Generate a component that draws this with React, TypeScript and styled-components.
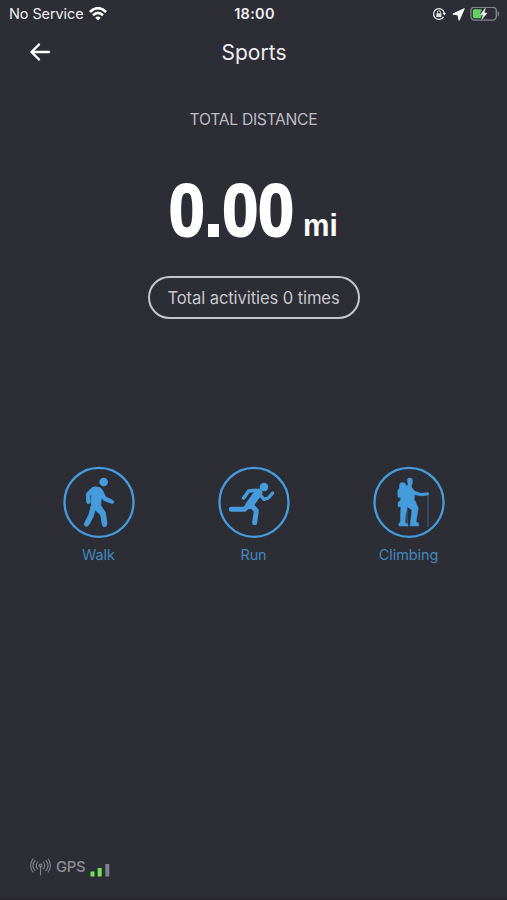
import React from "react";
import styled, { createGlobalStyle } from "styled-components";

const Global = createGlobalStyle`
  * { box-sizing: border-box; }
  body { margin: 0; background: #2d2d36; font-family: Inter, "Liberation Sans", sans-serif; }
`;
const Screen = styled.main`
  width: 507px; height: 900px; background: #2d2d36; color: #f2f2f5;
  display: flex; flex-direction: column; align-items: center; overflow: hidden;
  border-bottom: 3px solid #28262f;
`;
const StatusBar = styled.header`
  width: 100%; height: 28px; padding: 0 7px 0 9px;
  display: grid; grid-template-columns: 1fr auto 1fr; align-items: center;
`;
const StatusGroup = styled.div<{ $end?: boolean }>`
  display: flex; align-items: center; gap: 5.5px;
  justify-content: ${(p) => (p.$end ? "flex-end" : "flex-start")};
`;
const Label = styled.span<{ $size: number; $color?: string; $weight?: number; $track?: number }>`
  font-size: ${(p) => p.$size}px; line-height: 1.2; white-space: nowrap;
  color: ${(p) => p.$color ?? "#eeeef1"};
  font-weight: ${(p) => p.$weight ?? 400};
  letter-spacing: ${(p) => p.$track ?? 0}px;
`;
const NavBar = styled.nav`
  width: 100%; height: 48px; padding: 0 28px 0 29px;
  display: grid; grid-template-columns: 40px 1fr 40px; align-items: center; justify-items: center;
  svg { justify-self: start; }
  span { padding-top: 2px; }
`;
const Caption = styled.div`margin-top: 34px; height: 20px; display: flex; align-items: center;`;
const Distance = styled.div`
  width: 171px; height: 74px; margin-top: 43px; display: flex; align-items: baseline;
  color: #fff; font-family: "Liberation Sans", sans-serif; font-weight: 700; line-height: 74px;
`;
const Amount = styled.span`
  width: 134.5px; font-size: 75px; letter-spacing: -0.4px; transform: translateX(0.8px) scaleX(0.865);
  transform-origin: left; -webkit-text-stroke: 2px #fff;
`;
const Unit = styled.span`font-size: 32px; transform: scaleX(0.93); transform-origin: left;`;
const Pill = styled.button`
  width: 212px; height: 43px; margin-top: 29px; border: 2px solid #c6c6cb; border-radius: 22px;
  background: none; font-family: inherit; padding: 2px 0 0;
  display: flex; align-items: center; justify-content: center;
`;
const Activities = styled.section`
  width: 465px; margin-top: 147px; display: grid; grid-template-columns: repeat(3, 155px);
`;
const Activity = styled.div`
  display: flex; flex-direction: column; align-items: center; gap: 8px; color: #459bdb;
`;
const Gps = styled.footer`
  width: 100%; margin-top: auto; margin-bottom: 18px; height: 22px; padding-left: 30px;
  display: flex; align-items: center; gap: 5px;
`;
const Antenna = styled.svg`margin-top: -2px;`;
const SignalBars = styled.svg`margin-top: 3px;`;

const Ring = ({ children }: { children: React.ReactNode }) => (
  <svg width="72" height="72" viewBox="23 19 216 216" fill="currentColor" stroke="currentColor" strokeLinecap="round" strokeLinejoin="round">
    <circle cx="131" cy="128" r="103.5" fill="none" strokeWidth="7" />
    {children}
  </svg>
);
const Walk = () => (
  <Ring>
    <circle cx="145" cy="67" r="13" stroke="none" />
    <path d="M109 85Q119 79 130 83Q139 85 142 93L151 112L172 122Q178 126 174 130Q171 132 166 130L145 122L138 113L136 137L150 158L155 192Q155 201 147 201Q142 201 141 195L136 166L119 150L114 170L100 196Q96 202 90 199Q85 196 88 190L101 164L108 137V104L103 109L105 127Q104 132 98 132Q94 131 94 126L93 105Q93 101 97 97Z" strokeWidth="2.5" />
  </Ring>
);
const Run = () => (
  <Ring>
    <circle cx="161" cy="82" r="13" stroke="none" />
    <path d="M144 99L117 136" fill="none" strokeWidth="24" />
    <path d="M137 92L115 94L100 115" fill="none" strokeWidth="11" />
    <path d="M148 104L161 119L174 115L187 100" fill="none" strokeWidth="10" />
    <path d="M113 139L102 149H63" fill="none" strokeWidth="15" />
    <path d="M120 134L138 153L133 189" fill="none" strokeWidth="15" />
  </Ring>
);
const Climb = () => (
  <Ring>
    <path d="M126 59Q126 55 134 54Q142 55 142 61V68Q142 77 134 78H129L126 68Z" stroke="none" />
    <path d="M127 73V85H139V73Z" stroke="none" />
    <path d="M103 74Q103 69 109 69H116Q121 70 121 76L140 84L147 94L166 101L184 99Q188 95 190 101L189 106L168 109L148 105L146 122L151 128L108 136L105 142L98 140V128L104 124L107 116L98 112L97 93L102 86Z" strokeWidth="1.5" />
    <path d="M108 122H148L159 145L152 186L160 191V199H134L140 151L126 141L121 164L119 188L128 194V199H101L100 193L105 187L106 158Z" strokeWidth="1.5" />
    <path d="M188 103V200" strokeWidth="2.4" opacity=".65" />
    <path d="M125 145V199" strokeWidth="2.4" opacity=".7" />
  </Ring>
);
const Wifi = () => (
  <svg width="18" height="14" viewBox="0 0 18 14" fill="none" stroke="#fff" strokeWidth="2.6">
    <path d="M.9 5Q9-2.6 17.1 5M4 8.2Q9 3.7 14 8.2" /><path d="M6.3 10.7Q9 8.5 11.7 10.7L9 13.5Z" fill="#fff" stroke="none" />
  </svg>
);
const Lock = () => (
  <svg width="14" height="14" viewBox="0 0 14 14" fill="none" stroke="#e5e5e8" strokeWidth="1.3">
    <path d="M11.6 9.8A5.4 5.4 0 1 1 12.3 6.2" /><path d="M10.4 6.1H14L12.3 8.5Z" fill="#e5e5e8" stroke="none" />
    <rect x="4.4" y="6.3" width="5" height="3.7" fill="#e5e5e8" stroke="none" /><path d="M5.3 6.5V5.2Q5.3 3.8 6.9 3.8T8.5 5.2V6.5" strokeWidth="1" />
  </svg>
);
const Battery = () => (
  <svg width="30" height="15" viewBox="0 0 30 15">
    <rect x=".9" y=".3" width="25.4" height="12.8" rx="3.5" fill="none" stroke="#84848a" strokeWidth="1.4" />
    <path d="M4.5 2.2H12L9.8 7.2H12.3L10.5 11.3H4.5Q2.8 11.3 2.8 9.5V4Q2.8 2.2 4.5 2.2Z" fill="#60d364" />
    <path d="M15.3 1.3L10.6 7.4H13.3L11.8 12.3L17 6.1H14.1Z" fill="#fff" stroke="#fff" strokeWidth=".5" />
    <path d="M28 4.6Q30 6.8 28 9.1Z" fill="#84848a" stroke="#84848a" strokeWidth=".6" />
  </svg>
);
const activities = [
  { name: "Walk", Icon: Walk },
  { name: "Run", Icon: Run },
  { name: "Climbing", Icon: Climb },
];

export default function App() {
  return (
    <Screen>
      <Global />
      <StatusBar>
        <StatusGroup><Label $size={14.5} $track={-0.1}>No Service</Label><Wifi /></StatusGroup>
        <Label $size={14.5} $weight={600} $track={0.3}>18:00</Label>
        <StatusGroup $end>
          <Lock />
          <svg width="13" height="13" viewBox="0 0 13 13"><path d="M12.3.7L7.1 12.3L6 7L.8 6Z" fill="#fff" stroke="#fff" strokeLinejoin="round" /></svg>
          <Battery />
        </StatusGroup>
      </StatusBar>
      <NavBar>
        <svg width="23" height="20" viewBox="0 0 23 20" fill="none" stroke="#fff" strokeWidth="2.4" strokeLinecap="round" strokeLinejoin="round"><path d="M20 10H2.5M10 2.5L2.5 10L10 17.5" /></svg>
        <Label $size={21} $track={0.05}>Sports</Label>
      </NavBar>
      <Caption><Label $size={15.7} $color="#bdbdc2" $track={-0.3}>TOTAL DISTANCE</Label></Caption>
      <Distance><Amount>0.00</Amount><Unit>mi</Unit></Distance>
      <Pill><Label $size={16.6} $color="#c8c8cd" $track={-0.1}>Total activities 0 times</Label></Pill>
      <Activities>
        {activities.map(({ name, Icon }) => (
          <Activity key={name}><Icon /><Label $size={14.5} $color="#4288bd" $track={-0.1}>{name}</Label></Activity>
        ))}
      </Activities>
      <Gps>
        <Antenna width="21" height="20" viewBox="0 0 21 20" fill="none" stroke="#85858b" strokeWidth="1.1" strokeLinecap="round">
          <path d="M10.5 9V18M7.7 12Q4.7 8.5 7.7 5M13.3 12Q16.3 8.5 13.3 5M5.1 13.7Q.8 8.5 5.1 3.3M15.9 13.7Q20.2 8.5 15.9 3.3M2.8 15Q-1.6 8.5 2.8 2M18.2 15Q22.6 8.5 18.2 2" /><circle cx="10.5" cy="8.5" r="1.4" />
        </Antenna>
        <Label $size={14.8} $color="#8d8d93" $weight={500} $track={-0.3}>GPS</Label>
        <SignalBars width="20" height="14" viewBox="0 0 20 14"><path d="M.5 8.5h4v5h-4z M7.7 5h4v8.5h-4z" fill="#70e453" /><path d="M15.3 1h4v12.5h-4z" fill="#818187" /></SignalBars>
      </Gps>
    </Screen>
  );
}
